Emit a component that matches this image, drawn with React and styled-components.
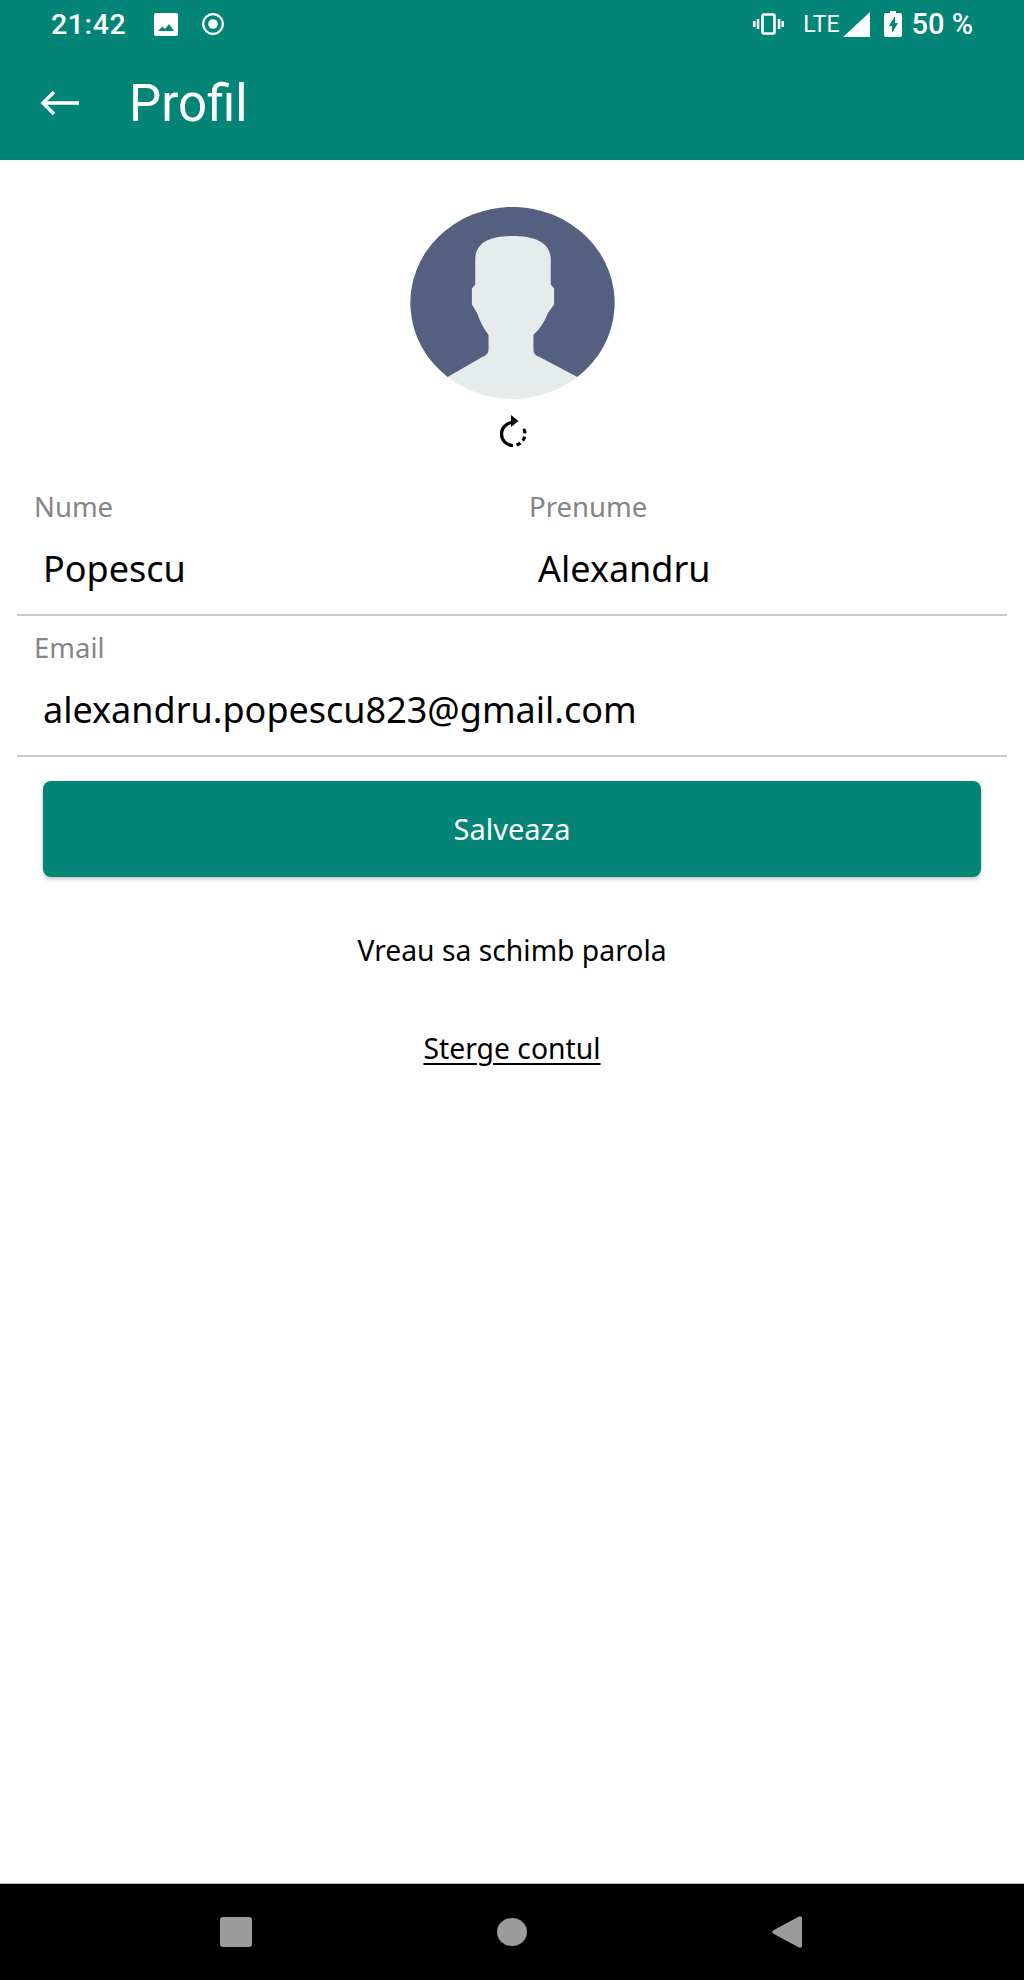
import React from "react";
import styled, { createGlobalStyle } from "styled-components";

const Global = createGlobalStyle`
  html, body { margin: 0; padding: 0; background: #fff; }
  * { box-sizing: border-box; }
`;
const Screen = styled.div`
  width: 1024px; height: 1980px; display: flex; flex-direction: column;
  font-family: "Noto Sans", sans-serif; color: #000; background: #fff; overflow: hidden;
`;
const Header = styled.header`
  height: 160px; background: #028576; color: #fff; flex: none;
  display: flex; flex-direction: column; font-family: Roboto, sans-serif;
`;
const StatusBar = styled.div`
  height: 48px; padding: 0 51px 0 51px; display: flex; align-items: center; justify-content: space-between;
`;
const StatusGroup = styled.div`
  display: flex; align-items: center; gap: ${p => p.$gap}px;
`;
const Time = styled.span`
  font-size: 28.5px; font-weight: 500; letter-spacing: .6px; margin-right: 4px;
`;
const Lte = styled.span`
  font-size: 23px; margin-left: 10px; margin-right: -5px;
`;
const Percent = styled.span`
  font-size: 29px; font-weight: 500;
`;
const Toolbar = styled.div`
  flex: 1; display: flex; align-items: center; padding: 0 0 2px 40px; gap: 49px;
`;
const Title = styled.h1`
  margin: 0; font-size: 51px; font-weight: 400; line-height: 1;
`;
const Body = styled.main`
  flex: 1; display: flex; flex-direction: column; align-items: center; padding-top: 47px;
`;
const Avatar = styled.svg`
  width: 205px; height: 192px; display: block;
`;
const Refresh = styled.svg`
  width: 30px; height: 32px; display: block; margin-top: 16px;
`;
const Form = styled.div`
  width: 100%; padding: 0 17px; margin-top: 33px; display: flex; flex-direction: column;
`;
const FieldRow = styled.div`
  display: grid; grid-template-columns: ${p => p.$cols}; height: 136px; padding-top: 8px;
  border-bottom: 2px solid #c8c8c8;
  margin-top: ${p => p.$top}px;
`;
const Field = styled.div`
  padding-left: 17px;
`;
const Label = styled.div`
  font-size: 27.5px; line-height: 38px; color: #858585;
`;
const Value = styled.div`
  font-size: 36px; line-height: 50px; padding: 18px 0 0 9px; color: #000;
`;
const SaveButton = styled.button`
  width: 938px; height: 96px; margin-top: 24px; padding: 0 0 2px; border: 0; border-radius: 8px; background: #028576; color: #fff;
  font: 400 29px "Noto Sans", sans-serif; box-shadow: 0 2px 4px rgba(0,0,0,.25);
`;
const LinkText = styled.div`
  font-size: 28.3px; line-height: 38px; margin-top: ${p => p.$top}px;
  text-decoration: ${p => p.$under ? "underline" : "none"};
  text-underline-offset: 4px;
`;
const NavBar = styled.nav`
  height: 97px; flex: none; background: #000; border-top: 1px solid #bbb;
  display: flex; align-items: center; padding: 0 222px 0 220px; justify-content: space-between;
`;
const Square = styled.div`
  width: 32px; height: 30px; background: #9b9b9b; border-radius: 3px;
`;
const Dot = styled.div`
  width: 30px; height: 28px; background: #9b9b9b; border-radius: 50%;
`;
const Back = styled.svg`
  width: 30px; height: 32px; display: block;
`;

export default function App() {
  return (
    <Screen>
      <Global />
      <Header>
        <StatusBar>
          <StatusGroup $gap={24}>
            <Time>21:42</Time>
            <svg width="24" height="23" viewBox="0 0 24 23"><path fill="#fff" fillRule="evenodd" d="M2 0h20a2 2 0 0 1 2 2v19a2 2 0 0 1-2 2H2a2 2 0 0 1-2-2V2a2 2 0 0 1 2-2Zm2 18h16l-5-7-4 5-2.500-2.500Z" /></svg>
            <svg width="22" height="22" viewBox="0 0 22 22"><circle cx="11" cy="11" r="9.800" fill="none" stroke="#fff" strokeWidth="2.200" /><circle cx="11" cy="11" r="4.800" fill="#fff" /></svg>
          </StatusGroup>
          <StatusGroup $gap={9}>
            <svg width="31" height="22" viewBox="0 0 31 22" fill="none" stroke="#fff" strokeWidth="2.600"><rect x="9.500" y="1.500" width="12" height="19" rx="1.500" /><path d="M5 6v10M1.300 8v6M26 6v10M29.700 8v6" /></svg>
            <Lte>LTE</Lte>
            <svg width="27" height="25" viewBox="0 0 27 25"><path fill="#fff" d="M27 0v25H0Z" /></svg>
            <svg style={{ marginLeft: 5 }} width="18" height="26" viewBox="0 0 18 26"><path fill="#fff" fillRule="evenodd" d="M6 0h6v2h4a2 2 0 0 1 2 2v20a2 2 0 0 1-2 2H2a2 2 0 0 1-2-2V4a2 2 0 0 1 2-2h4Zm5 5-6 10h3v7l6-10h-3Z" /></svg>
            <Percent>50 %</Percent>
          </StatusGroup>
        </StatusBar>
        <Toolbar>
          <svg width="40" height="26" viewBox="0 0 40 26" fill="none" stroke="#fff" strokeWidth="3.400"><path d="M39 13H3M14 2 3 13l11 11" /></svg>
          <Title>Profil</Title>
        </Toolbar>
      </Header>
      <Body>
        <Avatar viewBox="58 50 614 577">
          <path fill="#555f80" d="M170 561A307 288.500 0 1 1 560 561Z" />
          <path fill="#e6ebeb" d="M365 137C300 137 253 155 253 208V283L243 295V343L258 368C268 395 280 418 293 435V478C293 490 285 497 275 500L170 561A307 288.500 0 0 0 560 561L445 500C435 497 428 490 428 478V435C445 418 462 395 472 368L490 343V295L480 283V208C480 155 430 137 365 137Z" />
        </Avatar>
        <Refresh viewBox="7 5 30 32" fill="none" stroke="#000" strokeWidth="3.200">
          <path d="M23 12.500A11.500 11.500 0 0 0 23 35.500" />
          <path d="M26.500 35A11.500 11.500 0 0 0 33 17.500" strokeDasharray="4.500 3.200" />
          <path d="M21 5 28.500 11 21 17Z" fill="#000" stroke="none" />
        </Refresh>
        <Form>
          <FieldRow $cols="495px 1fr" $top={0}>
            <Field>
              <Label>Nume</Label>
              <Value>Popescu</Value>
            </Field>
            <Field>
              <Label>Prenume</Label>
              <Value>Alexandru</Value>
            </Field>
          </FieldRow>
          <FieldRow $cols="1fr" $top={5}>
            <Field>
              <Label>Email</Label>
              <Value>alexandru.popescu823@gmail.com</Value>
            </Field>
          </FieldRow>
        </Form>
        <SaveButton>Salveaza</SaveButton>
        <LinkText $top={54}>Vreau sa schimb parola</LinkText>
        <LinkText $top={60} $under>Sterge contul</LinkText>
      </Body>
      <NavBar>
        <Square />
        <Dot />
        <Back viewBox="0 0 30 32"><path fill="#9b9b9b" d="M27 0.500a2 2 0 0 1 3 1.500v28a2 2 0 0 1-3 1.500L1 17.500a2 2 0 0 1 0-3Z" /></Back>
      </NavBar>
    </Screen>
  );
}
